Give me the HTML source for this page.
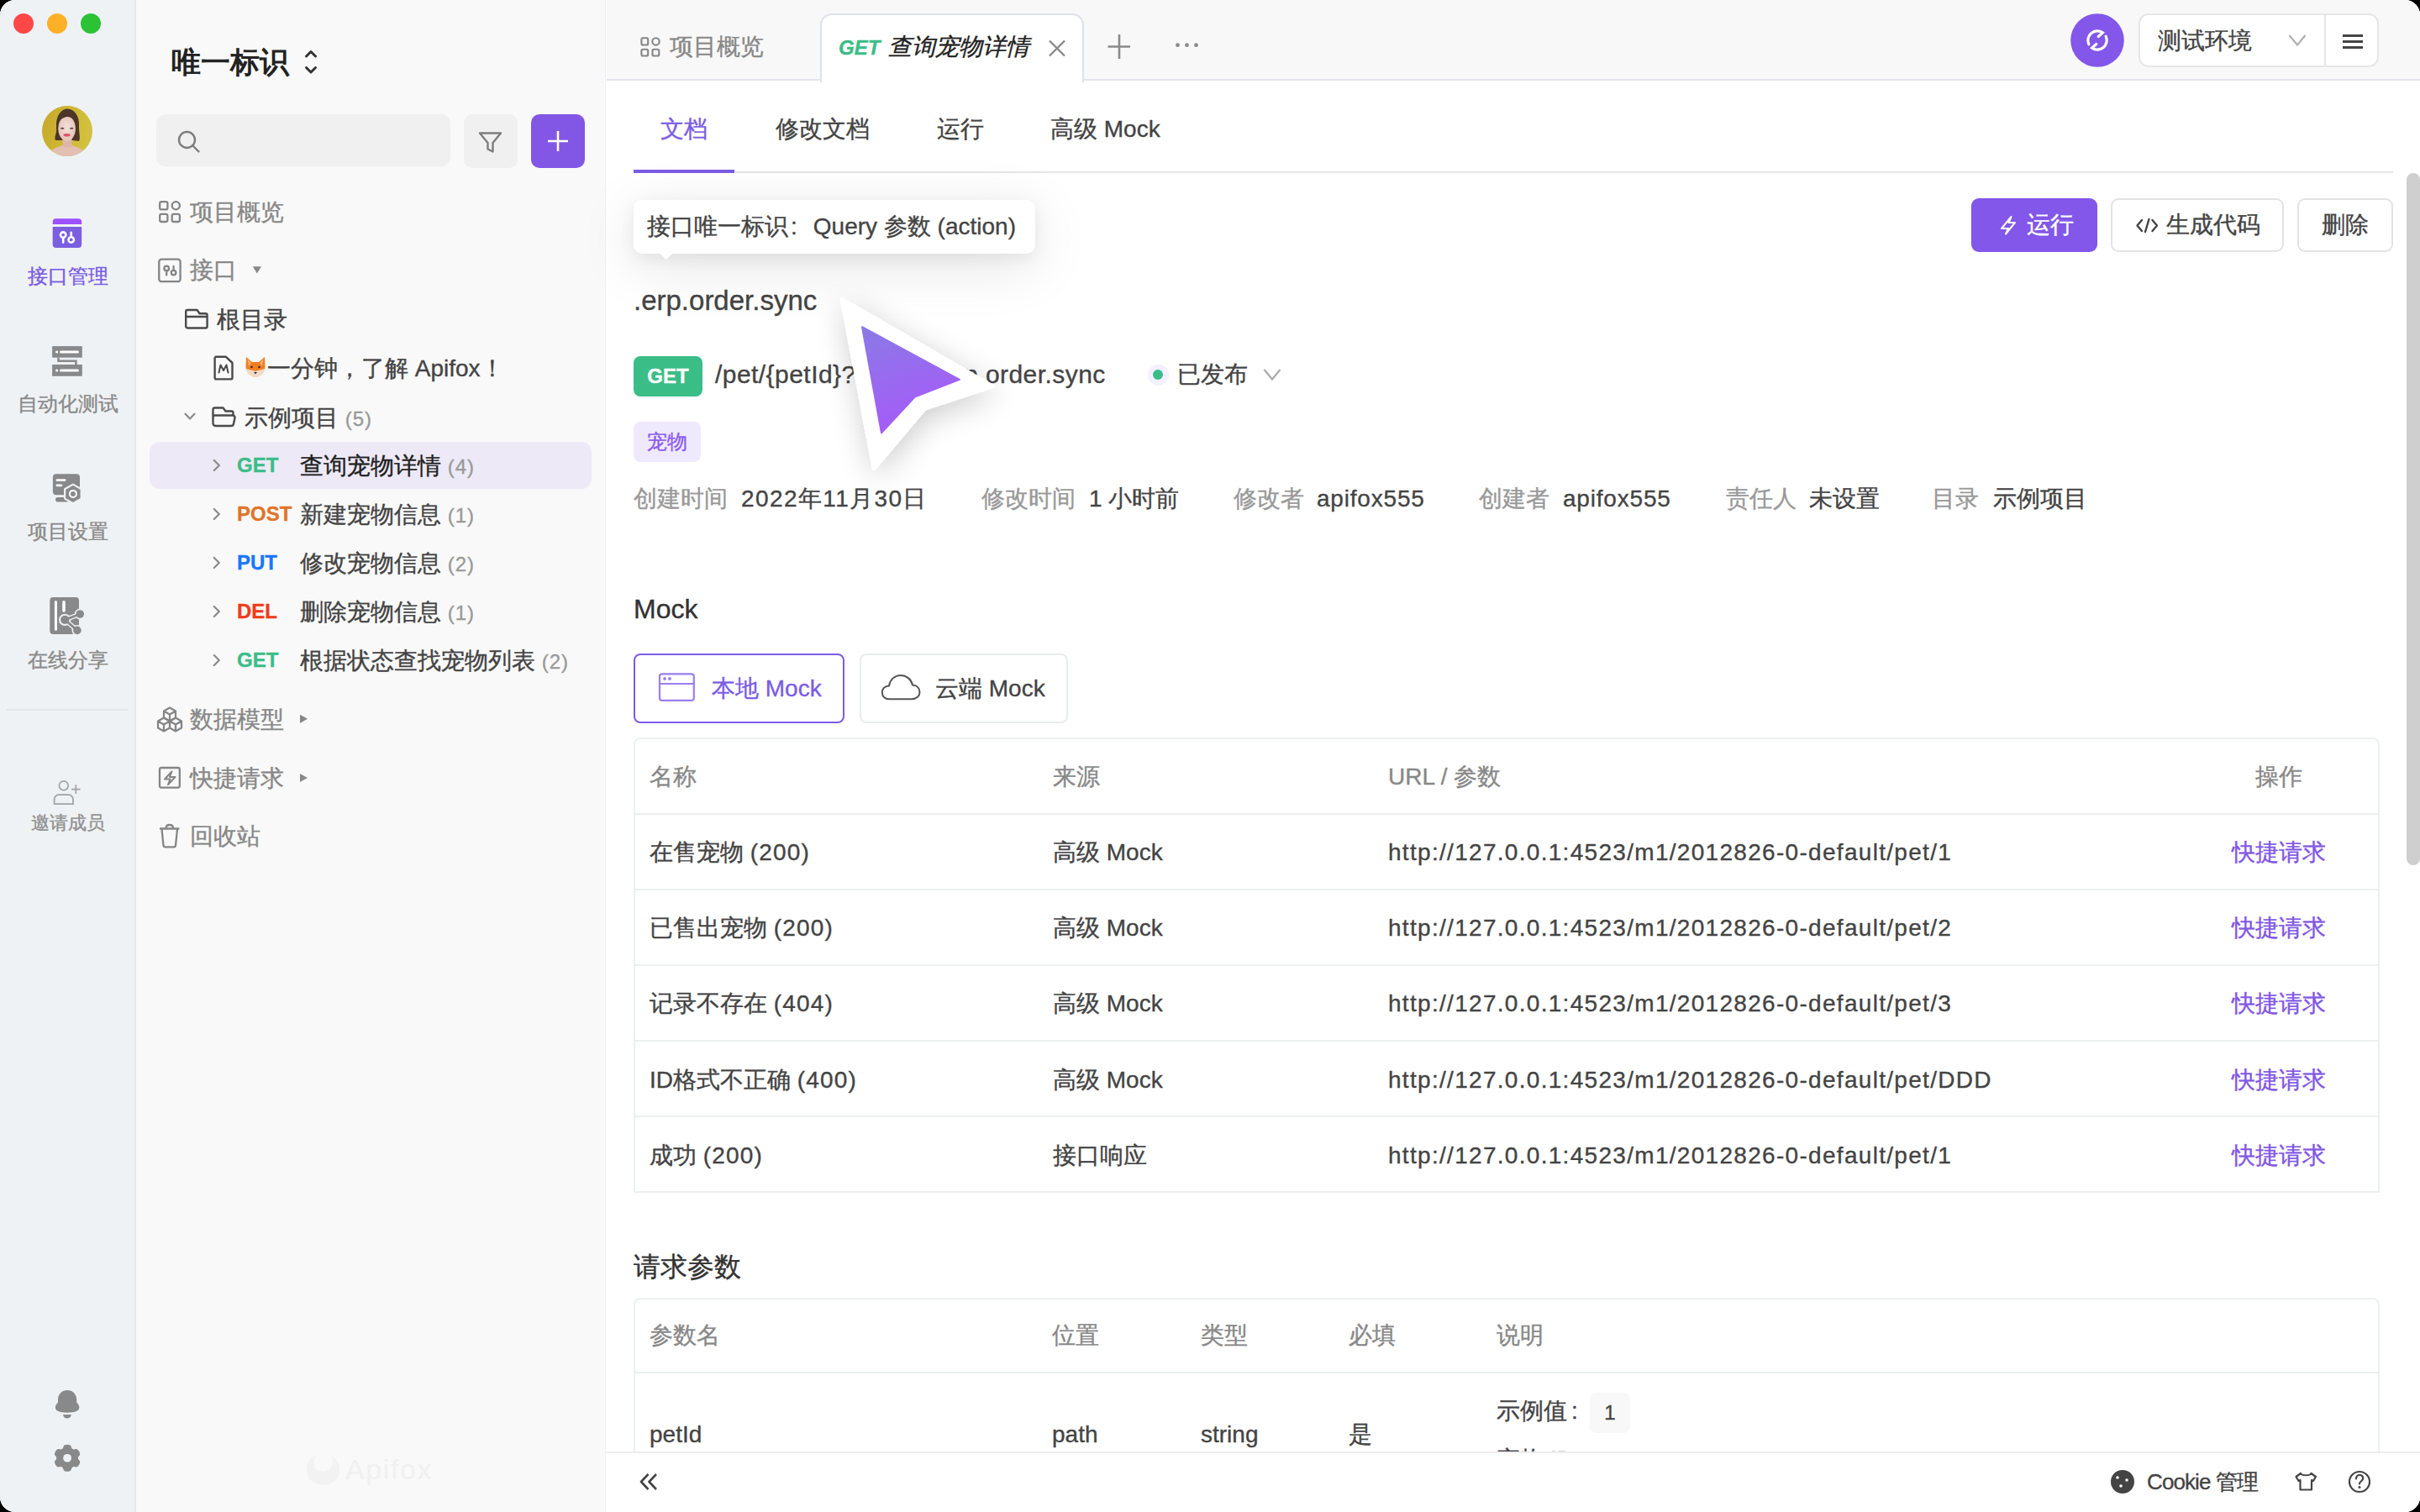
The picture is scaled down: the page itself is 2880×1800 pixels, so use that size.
<!DOCTYPE html>
<html><head><meta charset="utf-8">
<style>
*{margin:0;padding:0;box-sizing:border-box}
html,body{width:2880px;height:1800px;overflow:hidden;background:#000}
body{font-family:"Liberation Sans",sans-serif;color:#444;-webkit-text-stroke:0.35px currentColor}
#win{position:absolute;left:0;top:0;width:2880px;height:1800px;border-radius:18px;overflow:hidden;background:#fff}
.a{position:absolute;white-space:nowrap}
#rail{position:absolute;left:0;top:0;width:162px;height:1800px;background:#eff2f4;border-right:2px solid #e6e9ec}
#tree{position:absolute;left:162px;top:0;width:560px;height:1800px;background:#f9f9f9;border-right:2px solid #eef1f4}
#main{position:absolute;left:721px;top:0;width:2159px;height:1800px;background:#fff}
.dot{position:absolute;width:24px;height:24px;border-radius:50%}
.rl{position:absolute;left:0;width:162px;text-align:center;font-size:24px;color:#8a8a8a;line-height:30px}
.ti{position:absolute;font-size:28px;line-height:36px;color:#444;white-space:nowrap}
.cnt{font-size:24px;color:#999;letter-spacing:1px}
.m{position:absolute;font-size:24px;font-weight:bold;line-height:36px}
</style></head><body>
<div id="win">
<!-- ============ LEFT RAIL ============ -->
<div id="rail">
  <div class="dot" style="left:16px;top:16px;background:#fe4848"></div>
  <div class="dot" style="left:56px;top:16px;background:#feb027"></div>
  <div class="dot" style="left:96px;top:16px;background:#2bc334"></div>
  <svg class="a" style="left:50px;top:126px" width="60" height="60" viewBox="0 0 60 60">
    <defs><clipPath id="avc"><circle cx="30" cy="30" r="30"/></clipPath>
    <linearGradient id="avbg" x1="0" y1="0" x2="1" y2="0.3"><stop offset="0" stop-color="#c8a52c"/><stop offset="0.5" stop-color="#cdb632"/><stop offset="1" stop-color="#d2c13e"/></linearGradient>
    <radialGradient id="skin" cx="0.5" cy="0.45" r="0.6"><stop offset="0" stop-color="#f5e0da"/><stop offset="1" stop-color="#e2c0b2"/></radialGradient></defs>
    <g clip-path="url(#avc)">
      <rect width="60" height="60" fill="url(#avbg)"/>
      <path d="M17 26 C16 11 23 4 30 3.5 C38 4 45 11 44 25 C44 33 46 38 44 42 L36 41 L24 41 L16 41 C14 36 18 33 17 26Z" fill="#4d3528"/>
      <path d="M4 60 C8 53 16 50 24 47 L36 47 C44 50 52 53 56 60Z" fill="#e2bfb0"/>
      <rect x="24.5" y="36" width="11" height="13" fill="#dcb6a6"/>
      <ellipse cx="29.6" cy="27" rx="10.3" ry="15" fill="url(#skin)"/>
      <path d="M19 20 C21 10 29 7.5 33 8 C40 9 43 15 42 24 C40 17 36 13.5 30 13 C25 13.5 21 17 19 20Z" fill="#4d3528"/>
      <ellipse cx="24.2" cy="26.8" rx="2.4" ry="1.1" fill="#6b5550"/>
      <ellipse cx="35.2" cy="26.8" rx="2.4" ry="1.1" fill="#6b5550"/>
      <ellipse cx="29.6" cy="34.8" rx="4.2" ry="1.8" fill="#e24e6a"/>
    </g>
  </svg>
  <svg class="a" style="left:0;top:240px" width="162" height="620" viewBox="0 240 162 620">
    <!-- api icon -->
    <path d="M62.7 267 V264.3 a4 4 0 0 1 4 -4 H93.2 a4 4 0 0 1 4 4 V267Z" fill="#9d50ff"/>
    <path d="M62.7 270 H97.2 V291 a4 4 0 0 1 -4 4 H66.7 a4 4 0 0 1 -4 -4Z" fill="#7b5fe0"/>
    <circle cx="75.2" cy="279.6" r="3.2" fill="none" stroke="#fff" stroke-width="2.6"/>
    <path d="M75.2 283 V288.6" stroke="#fff" stroke-width="2.6" stroke-linecap="round"/>
    <circle cx="84.7" cy="285.4" r="3.2" fill="none" stroke="#fff" stroke-width="2.6"/>
    <path d="M84.7 276.8 V282" stroke="#fff" stroke-width="2.6" stroke-linecap="round"/>
    <!-- auto test -->
    <rect x="62.1" y="412.1" width="35.7" height="13.6" fill="#88898b"/>
    <rect x="62.1" y="434" width="35.7" height="13.8" fill="#88898b"/>
    <circle cx="67.6" cy="419" r="1.6" fill="#fff"/>
    <rect x="71" y="417.5" width="23" height="3" rx="1.5" fill="#fff"/>
    <circle cx="67.6" cy="441" r="1.6" fill="#fff"/>
    <rect x="71" y="439.5" width="23" height="3" rx="1.5" fill="#fff"/>
    <path d="M69.5 425.7 V429.8 H90.4 V434" fill="none" stroke="#88898b" stroke-width="2.6"/>
    <!-- settings -->
    <rect x="62.9" y="564.3" width="32.1" height="25" rx="4" fill="#88898b"/>
    <rect x="66" y="592" width="16" height="5.6" rx="2.8" fill="#88898b"/>
    <rect x="66.5" y="570.2" width="12" height="2.8" rx="1.4" fill="#fff"/>
    <rect x="66.5" y="576.4" width="7.8" height="2.8" rx="1.4" fill="#fff"/>
    <path d="M86.9 576.6 L96.7 582.2 V593.6 L86.9 599.2 L77.1 593.6 V582.2Z" fill="#88898b" stroke="#eff2f4" stroke-width="2.2" stroke-linejoin="round"/>
    <circle cx="86.9" cy="587.9" r="4" fill="none" stroke="#fff" stroke-width="2"/>
    <!-- share -->
    <rect x="59.3" y="711" width="34.7" height="44" rx="4" fill="#88898b"/>
    <rect x="64.9" y="715" width="3.1" height="35.8" rx="1.5" fill="#fff"/>
    <rect x="74.2" y="715" width="3.6" height="13.8" rx="1.8" fill="#fff"/>
    <g stroke="#eff2f4" stroke-width="5.5" fill="none" stroke-linecap="round"><path d="M77.2 737.9 L95.2 731 M77.2 737.9 L91.9 750.4"/></g>
    <circle cx="77.2" cy="737.9" r="7.2" fill="#eff2f4"/>
    <circle cx="95.2" cy="731" r="6.4" fill="#eff2f4"/>
    <circle cx="91.9" cy="750.4" r="6.4" fill="#eff2f4"/>
    <g stroke="#88898b" stroke-width="2.8" fill="none"><path d="M77.2 737.9 L95.2 731 M77.2 737.9 L91.9 750.4"/></g>
    <circle cx="77.2" cy="737.9" r="5.1" fill="#88898b"/>
    <circle cx="95.2" cy="731" r="4.8" fill="#88898b"/>
    <circle cx="91.9" cy="750.4" r="4.8" fill="#88898b"/>
    <!-- divider -->
    <rect x="8" y="844" width="144" height="2" fill="#e3e6e9"/>
  </svg>
  <div class="rl" style="top:314px;color:#7b5ce5;font-weight:500">接口管理</div>
  <div class="rl" style="top:466px">自动化测试</div>
  <div class="rl" style="top:618px">项目设置</div>
  <div class="rl" style="top:771px">在线分享</div>
  <svg class="a" style="left:50px;top:920px" width="60" height="60" viewBox="50 920 60 60">
    <circle cx="75.8" cy="935.3" r="5.4" fill="none" stroke="#a0a1a3" stroke-width="1.7"/>
    <path d="M64.6 957.2 V951.6 a5.4 5.4 0 0 1 5.4 -5.4 H81.6 a5.4 5.4 0 0 1 5.4 5.4 V957.2Z" fill="none" stroke="#a0a1a3" stroke-width="1.8"/>
    <path d="M85 939.7 H95.6 M90.3 934.3 V945" stroke="#a0a1a3" stroke-width="1.7"/>
  </svg>
  <div class="rl" style="top:965px;font-size:22px;color:#909090">邀请成员</div>
  <svg class="a" style="left:50px;top:1640px" width="60" height="130" viewBox="50 1640 60 130">
    <path d="M69 1669.5 V1666 C69 1659.5 74 1655 80.1 1655 C86.2 1655 91.2 1659.5 91.2 1666 V1669.5 C93 1671.5 94.3 1673 94.3 1675.5 C94.3 1679.5 90 1681.7 80.1 1681.7 C70.2 1681.7 65.9 1679.5 65.9 1675.5 C65.9 1673 67.2 1671.5 69 1669.5Z" fill="#88898b"/>
    <path d="M75 1684 H84.8 C84.3 1687 82.5 1688.6 79.9 1688.6 C77.3 1688.6 75.5 1687 75 1684Z" fill="#88898b"/>
    <g transform="translate(80.1 1735.8)">
      <path d="M-4.6 -13.6 C-4.2 -16.8 4.2 -16.8 4.6 -13.6 C5 -11 7.4 -9.6 9.8 -10.7 C12.6 -12 16.8 -4.8 14.4 -3 C12.2 -1.4 12.2 1.4 14.4 3 C16.8 4.8 12.6 12 9.8 10.7 C7.4 9.6 5 11 4.6 13.6 C4.2 16.8 -4.2 16.8 -4.6 13.6 C-5 11 -7.4 9.6 -9.8 10.7 C-12.6 12 -16.8 4.8 -14.4 3 C-12.2 1.4 -12.2 -1.4 -14.4 -3 C-16.8 -4.8 -12.6 -12 -9.8 -10.7 C-7.4 -9.6 -5 -11 -4.6 -13.6Z" fill="#88898b"/>
      <circle r="4.9" fill="#eff2f4"/>
    </g>
  </svg>
</div>
<!-- ============ TREE ============ -->
<div id="tree"></div>
<div id="treec">
  <div class="a" style="left:178px;top:526px;width:526px;height:56px;background:#ede9f6;border-radius:12px"></div>
  <div class="a" style="left:204px;top:50px;font-size:35px;line-height:47px;font-weight:bold;color:#222;-webkit-text-stroke:0">唯一标识</div>
  <div class="a" style="left:186px;top:136px;width:350px;height:62px;background:#f0f0f0;border-radius:10px"></div>
  <div class="a" style="left:552px;top:136px;width:64px;height:64px;background:#f0f0f0;border-radius:10px"></div>
  <div class="a" style="left:632px;top:136px;width:64px;height:64px;background:#8257e5;border-radius:10px"></div>
  <svg class="a" style="left:162px;top:0" width="560" height="1800" viewBox="162 0 560 1800">
    <g fill="none" stroke="#333" stroke-width="3" stroke-linecap="round" stroke-linejoin="round">
      <path d="M364.5 67 L370 61.5 L375.5 67 M364.5 80.5 L370 86 L375.5 80.5"/>
    </g>
    <g fill="none" stroke="#7d7d7d" stroke-width="2.4" stroke-linecap="round">
      <circle cx="222.5" cy="166.5" r="9.5"/><path d="M229.5 173.5 L236.5 180.5"/>
    </g>
    <path d="M571 158.5 H596 L586.5 170 V180.5 L580.5 177.5 V170Z" fill="none" stroke="#7d7d7d" stroke-width="2.4" stroke-linejoin="round"/>
    <path d="M664 156 V180 M652 168 H676" stroke="#fff" stroke-width="2.6"/>
    <!-- overview icon -->
    <g fill="none" stroke="#858585" stroke-width="2.3">
      <rect x="190.2" y="240.2" width="9.2" height="9.2" rx="2"/>
      <circle cx="209.3" cy="244.8" r="4.6"/>
      <rect x="190.2" y="254.8" width="9.2" height="9.2" rx="2"/>
      <rect x="204.7" y="254.8" width="9.2" height="9.2" rx="2"/>
    </g>
    <!-- api icon -->
    <g fill="none" stroke="#858585" stroke-width="2.3" stroke-linecap="round">
      <rect x="189.3" y="308.6" width="25.3" height="26.6" rx="3"/>
      <circle cx="198.2" cy="319.4" r="2.8"/><path d="M198.2 322.4 V327.6"/>
      <circle cx="206.6" cy="324.6" r="2.8"/><path d="M206.6 316.8 V321.6"/>
    </g>
    <path d="M300.8 317.3 H311 L305.9 325.5Z" fill="#888"/>
    <!-- root folder -->
    <path d="M221.2 389 V371 a2 2 0 0 1 2 -2 H234.5 L237.5 373.2 H244.6 a2 2 0 0 1 2 2 V388.5 a2 2 0 0 1 -2 2 H223.2 a2 2 0 0 1 -2 -1.5Z M221.2 377 H246.6" fill="none" stroke="#4a4a4a" stroke-width="2.4" stroke-linejoin="round"/>
    <!-- doc icon -->
    <path d="M256.6 424.7 H268.7 L276.5 432 V449.4 a2 2 0 0 1 -2 2 H257.6 a2 2 0 0 1 -2 -2 V426.7 a2 2 0 0 1 1 -2Z" fill="none" stroke="#4a4a4a" stroke-width="2.4" stroke-linejoin="round"/>
    <path d="M260.5 443.5 L262.5 434.5 L266 441 L269.5 434.5 L271.5 443.5" fill="none" stroke="#4a4a4a" stroke-width="2" stroke-linejoin="round" stroke-linecap="round"/>
    <!-- fox -->
    <g transform="translate(291 424)">
      <path d="M2 1 L9 7 L17 7 L24 1 L24.5 13 C24 19 19 24 13 25 C7 24 2 19 1.5 13Z" fill="#f47d20"/>
      <path d="M3.5 3.5 L8 8 L5 12Z M22.5 3.5 L18 8 L21 12Z" fill="#f9b37a"/>
      <path d="M1.6 15 C4 16 8 16 13 18 C18 16 22 16 24.4 15 C23.5 20 19 24.5 13 25 C7 24.5 2.5 20 1.6 15Z" fill="#efdcc2"/>
      <circle cx="8.5" cy="13" r="1.3" fill="#2b2b3a"/><circle cx="17.5" cy="13" r="1.3" fill="#2b2b3a"/>
      <path d="M11 19 H15 L13 21.5Z" fill="#2b2b3a"/>
    </g>
    <!-- chevron down -->
    <path d="M220.5 492.7 L226 498.5 L231.5 492.7" fill="none" stroke="#8a8a8a" stroke-width="2.2" stroke-linecap="round" stroke-linejoin="round"/>
    <!-- open folder -->
    <path d="M253.5 504 V487.5 a2 2 0 0 1 2 -2 H265.5 L268.5 489.5 H275.5 a2 2 0 0 1 2 2 V494 M253.5 504 a3 3 0 0 0 3 3 H275 a3 3 0 0 0 3 -2.5 L279.5 497.5 a2.5 2.5 0 0 0 -2.5 -3 H256 a2.5 2.5 0 0 0 -2.5 2.5" fill="none" stroke="#4a4a4a" stroke-width="2.4" stroke-linejoin="round"/>
    <!-- method chevrons -->
    <g fill="none" stroke="#8a8a8a" stroke-width="2.2" stroke-linecap="round" stroke-linejoin="round">
      <path d="M254.8 548 L260.8 554 L254.8 560"/>
      <path d="M254.8 606 L260.8 612 L254.8 618"/>
      <path d="M254.8 664 L260.8 670 L254.8 676"/>
      <path d="M254.8 722 L260.8 728 L254.8 734"/>
      <path d="M254.8 780 L260.8 786 L254.8 792"/>
    </g>
    <!-- data model cubes -->
    <g fill="none" stroke="#858585" stroke-width="2.2" stroke-linejoin="round">
      <path d="M202 842.5 L209 846.5 V854.5 L202 858.5 L195 854.5 V846.5Z M195 846.5 L202 850.5 L209 846.5 M202 850.5 V858.5"/>
      <path d="M195 854.5 L202 858.5 V866.5 L195 870.5 L188 866.5 V858.5Z M188 858.5 L195 862.5 L202 858.5 M195 862.5 V870.5"/>
      <path d="M209 854.5 L216 858.5 V866.5 L209 870.5 L202 866.5 V858.5Z M202 858.5 L209 862.5 L216 858.5 M209 862.5 V870.5"/>
    </g>
    <path d="M357 850.7 L366 855.8 L357 860.9Z" fill="#888"/>
    <!-- quick request -->
    <rect x="190" y="914" width="23.8" height="23.6" rx="2" fill="none" stroke="#858585" stroke-width="2.3"/>
    <path d="M204.5 918.5 L196 927.5 H202.5 L200 934 L208.5 925 H202Z" fill="none" stroke="#858585" stroke-width="2" stroke-linejoin="round"/>
    <path d="M357 921 L366 926 L357 931Z" fill="#888"/>
    <!-- trash -->
    <path d="M190 986.5 H213.5 M197.5 986 C197.5 982.5 200 982 201.8 982 C203.6 982 206 982.5 206 986 M192.5 987 L194.5 1006.5 a2 2 0 0 0 2 1.8 H207 a2 2 0 0 0 2 -1.8 L211 987" fill="none" stroke="#858585" stroke-width="2.3" stroke-linejoin="round"/>
    <!-- watermark -->
    <path d="M376 1732.5 C368 1736 364.8 1743 364.8 1750 C364.8 1760 373 1768 384.4 1768 C395.8 1768 404 1760 404 1750 C404 1743 400.5 1736 393 1732 C395.5 1735 396 1738 396 1740 C396 1747 390.5 1751.5 384 1751.5 C377.5 1751.5 373.5 1747 373.5 1740 C373.5 1737.5 374.5 1735 376 1732.5Z" fill="#f2f2f2"/>
  </svg>
  <div class="a" style="left:411px;top:1729px;font-size:34px;line-height:40px;letter-spacing:1.6px;color:#f0f0f0;-webkit-text-stroke:0">Apifox</div>
  <div class="ti" style="left:226px;top:235px;color:#888">项目概览</div>
  <div class="ti" style="left:226px;top:304px;color:#888">接口</div>
  <div class="ti" style="left:258px;top:363px">根目录</div>
  <div class="ti" style="left:318px;top:421px">一分钟，了解 Apifox！</div>
  <div class="ti" style="left:291px;top:480px">示例项目 <span class="cnt">(5)</span></div>
  <div class="m" style="left:282px;top:536px;color:#3bbd87">GET</div>
  <div class="ti" style="left:357px;top:537px;color:#222">查询宠物详情 <span class="cnt">(4)</span></div>
  <div class="m" style="left:282px;top:594px;color:#e0742a">POST</div>
  <div class="ti" style="left:357px;top:595px">新建宠物信息 <span class="cnt">(1)</span></div>
  <div class="m" style="left:282px;top:652px;color:#1a75ff">PUT</div>
  <div class="ti" style="left:357px;top:653px">修改宠物信息 <span class="cnt">(2)</span></div>
  <div class="m" style="left:282px;top:710px;color:#f03c17">DEL</div>
  <div class="ti" style="left:357px;top:711px">删除宠物信息 <span class="cnt">(1)</span></div>
  <div class="m" style="left:282px;top:768px;color:#3bbd87">GET</div>
  <div class="ti" style="left:357px;top:769px">根据状态查找宠物列表 <span class="cnt">(2)</span></div>
  <div class="ti" style="left:226px;top:839px;color:#888">数据模型</div>
  <div class="ti" style="left:226px;top:909px;color:#888">快捷请求</div>
  <div class="ti" style="left:226px;top:978px;color:#888">回收站</div>
</div>
<!-- ============ MAIN ============ -->
<div id="main"></div>
<div id="mainc">
  <!-- tab bar -->
  <div class="a" style="left:722px;top:0;width:2158px;height:96px;background:#f8f8f8;border-bottom:2px solid #e3e6ec"></div>
  <div class="a" style="left:976px;top:16px;width:314px;height:82px;background:#fff;border:2px solid #dfe2ea;border-bottom:none;border-radius:14px 14px 0 0"></div>
  <div class="ti" style="left:797px;top:38px;color:#888">项目概览</div>
  <div class="a" style="left:998px;top:39px;font-size:24px;line-height:36px;font-weight:bold;font-style:italic;color:#3bbd87">GET</div>
  <div class="ti" style="left:1057px;top:38px;color:#222;font-style:italic">查询宠物详情</div>
  <div class="a" style="left:2545px;top:16px;width:286px;height:64px;background:#fff;border:2px solid #e6e6e6;border-radius:12px"></div>
  <div class="a" style="left:2766px;top:17px;width:2px;height:62px;background:#e6e6e6"></div>
  <div class="ti" style="left:2568px;top:31px;color:#444">测试环境</div>
  <!-- sub tabs -->
  <div class="ti" style="left:786px;top:136px;color:#7b5ce5">文档</div>
  <div class="ti" style="left:923px;top:136px">修改文档</div>
  <div class="ti" style="left:1115px;top:136px">运行</div>
  <div class="ti" style="left:1250px;top:136px">高级 Mock</div>
  <div class="a" style="left:754px;top:204px;width:2094px;height:2px;background:#e6e6e6"></div>
  <div class="a" style="left:754px;top:202px;width:120px;height:4px;background:#7b5ce5"></div>
  <!-- action buttons -->
  <div class="a" style="left:2346px;top:236px;width:150px;height:64px;background:#8257e9;border-radius:9px"></div>
  <div class="ti" style="left:2412px;top:250px;color:#fff">运行</div>
  <div class="a" style="left:2512px;top:236px;width:206px;height:64px;border:2px solid #e3e3e3;border-radius:9px"></div>
  <div class="ti" style="left:2578px;top:250px">生成代码</div>
  <div class="a" style="left:2734px;top:236px;width:114px;height:64px;border:2px solid #e3e3e3;border-radius:9px"></div>
  <div class="ti" style="left:2763px;top:250px">删除</div>
  <!-- api header -->
  <div class="a" style="left:754px;top:336px;font-size:33px;line-height:44px;color:#444">.erp.order.sync</div>
  <div class="a" style="left:754px;top:424px;width:82px;height:48px;background:#3bbd87;border-radius:8px"></div>
  <div class="a" style="left:754px;top:430px;width:82px;text-align:center;font-size:24px;line-height:36px;font-weight:bold;color:#fff">GET</div>
  <div class="a" style="left:851px;top:426px;font-size:30px;line-height:40px;letter-spacing:0.45px;color:#444">/pet/{petId}?action=erp.order.sync</div>
  <div class="a" style="left:1365.5px;top:433.5px;width:25px;height:25px;border-radius:50%;background:#f4f0fd"></div>
  <div class="a" style="left:1372px;top:440px;width:12px;height:12px;border-radius:50%;background:#3bbd87"></div>
  <div class="ti" style="left:1401px;top:428px">已发布</div>
  <div class="a" style="left:754px;top:502px;width:80px;height:48px;background:#efe9fd;border-radius:8px"></div>
  <div class="a" style="left:754px;top:508px;width:80px;text-align:center;font-size:24px;line-height:36px;color:#8b5cf0">宠物</div>
  <!-- meta -->
  <div class="ti" style="left:754px;top:576px;color:#999">创建时间</div>
  <div class="ti" style="left:882px;top:576px;letter-spacing:1.4px">2022年11月30日</div>
  <div class="ti" style="left:1168px;top:576px;color:#999">修改时间</div>
  <div class="ti" style="left:1296px;top:576px">1 小时前</div>
  <div class="ti" style="left:1468px;top:576px;color:#999">修改者</div>
  <div class="ti" style="left:1567px;top:576px;letter-spacing:0.8px">apifox555</div>
  <div class="ti" style="left:1760px;top:576px;color:#999">创建者</div>
  <div class="ti" style="left:1860px;top:576px;letter-spacing:0.8px">apifox555</div>
  <div class="ti" style="left:2054px;top:576px;color:#999">责任人</div>
  <div class="ti" style="left:2153px;top:576px">未设置</div>
  <div class="ti" style="left:2299px;top:576px;color:#999">目录</div>
  <div class="ti" style="left:2372px;top:576px">示例项目</div>
  <!-- mock -->
  <div class="a" style="left:754px;top:703px;font-size:32px;line-height:44px;color:#333">Mock</div>
  <div class="a" style="left:754px;top:778px;width:251px;height:83px;border:2.5px solid #7b5ce5;border-radius:8px"></div>
  <div class="ti" style="left:847px;top:802px;color:#7b5ce5">本地 Mock</div>
  <div class="a" style="left:1023px;top:778px;width:248px;height:83px;border:2px solid #e9eded;border-radius:8px"></div>
  <div class="ti" style="left:1113px;top:802px">云端 Mock</div>
  <div class="a" style="left:754px;top:878px;width:2078px;height:542px;border:2px solid #edf0f0;border-radius:8px 8px 0 0"></div>
  <div class="a" style="left:756px;top:968px;width:2074px;height:2px;background:#edf0f0"></div>
  <div class="a" style="left:756px;top:1058px;width:2074px;height:2px;background:#edf0f0"></div>
  <div class="a" style="left:756px;top:1148px;width:2074px;height:2px;background:#edf0f0"></div>
  <div class="a" style="left:756px;top:1238px;width:2074px;height:2px;background:#edf0f0"></div>
  <div class="a" style="left:756px;top:1328px;width:2074px;height:2px;background:#edf0f0"></div>
  <div class="ti" style="left:773px;top:907px;color:#888">名称</div>
  <div class="ti" style="left:1253px;top:907px;color:#888">来源</div>
  <div class="ti" style="left:1652px;top:907px;color:#888">URL / 参数</div>
  <div class="ti" style="left:2684px;top:907px;color:#888">操作</div>
  <div class="ti" style="left:773px;top:997px">在售宠物 <span style="letter-spacing:1.2px">(200)</span></div>
  <div class="ti" style="left:1253px;top:997px">高级 Mock</div>
  <div class="ti" style="left:1652px;top:997px;letter-spacing:1.3px">http://127.0.0.1:4523/m1/2012826-0-default/pet/1</div>
  <div class="ti" style="left:2656px;top:997px;color:#8257e5">快捷请求</div>
  <div class="ti" style="left:773px;top:1087px">已售出宠物 <span style="letter-spacing:1.2px">(200)</span></div>
  <div class="ti" style="left:1253px;top:1087px">高级 Mock</div>
  <div class="ti" style="left:1652px;top:1087px;letter-spacing:1.3px">http://127.0.0.1:4523/m1/2012826-0-default/pet/2</div>
  <div class="ti" style="left:2656px;top:1087px;color:#8257e5">快捷请求</div>
  <div class="ti" style="left:773px;top:1177px">记录不存在 <span style="letter-spacing:1.2px">(404)</span></div>
  <div class="ti" style="left:1253px;top:1177px">高级 Mock</div>
  <div class="ti" style="left:1652px;top:1177px;letter-spacing:1.3px">http://127.0.0.1:4523/m1/2012826-0-default/pet/3</div>
  <div class="ti" style="left:2656px;top:1177px;color:#8257e5">快捷请求</div>
  <div class="ti" style="left:773px;top:1268px">ID格式不正确 <span style="letter-spacing:1.2px">(400)</span></div>
  <div class="ti" style="left:1253px;top:1268px">高级 Mock</div>
  <div class="ti" style="left:1652px;top:1268px;letter-spacing:1.3px">http://127.0.0.1:4523/m1/2012826-0-default/pet/DDD</div>
  <div class="ti" style="left:2656px;top:1268px;color:#8257e5">快捷请求</div>
  <div class="ti" style="left:773px;top:1358px">成功 <span style="letter-spacing:1.2px">(200)</span></div>
  <div class="ti" style="left:1253px;top:1358px">接口响应</div>
  <div class="ti" style="left:1652px;top:1358px;letter-spacing:1.3px">http://127.0.0.1:4523/m1/2012826-0-default/pet/1</div>
  <div class="ti" style="left:2656px;top:1358px;color:#8257e5">快捷请求</div>
  <!-- params -->
  <div class="a" style="left:754px;top:1486px;font-size:32px;line-height:44px;color:#333">请求参数</div>
  <div class="a" style="left:754px;top:1545px;width:2078px;height:300px;border:2px solid #edf0f0;border-radius:8px 8px 0 0"></div>
  <div class="a" style="left:756px;top:1633px;width:2074px;height:2px;background:#edf0f0"></div>
  <div class="ti" style="left:773px;top:1572px;color:#888">参数名</div>
  <div class="ti" style="left:1252px;top:1572px;color:#888">位置</div>
  <div class="ti" style="left:1429px;top:1572px;color:#888">类型</div>
  <div class="ti" style="left:1605px;top:1572px;color:#888">必填</div>
  <div class="ti" style="left:1781px;top:1572px;color:#888">说明</div>
  <div class="ti" style="left:773px;top:1690px">petId</div>
  <div class="ti" style="left:1252px;top:1690px">path</div>
  <div class="ti" style="left:1429px;top:1690px">string</div>
  <div class="ti" style="left:1605px;top:1690px">是</div>
  <div class="ti" style="left:1781px;top:1662px">示例值<span style="margin-left:5px">:</span></div>
  <div class="a" style="left:1892px;top:1658px;width:48px;height:48px;background:#f8f8f8;border-radius:8px"></div>
  <div class="a" style="left:1892px;top:1664px;width:48px;text-align:center;font-size:24px;line-height:36px;color:#444">1</div>
  <div class="ti" style="left:1781px;top:1720px">宠物 ID</div>
  <!-- scrollbar -->
  <div class="a" style="left:2864px;top:206px;width:16px;height:824px;background:#cfcfcf;border-radius:8px"></div>
  <!-- footer -->
  <div class="a" style="left:721px;top:1728px;width:2159px;height:72px;background:#fff;border-top:2px solid #eeeeee"></div>
  <div class="a" style="left:2555px;top:1746px;font-size:26px;line-height:36px;color:#444;letter-spacing:-0.9px">Cookie 管理</div>
  <!-- tooltip -->
  <div class="a" style="left:754px;top:238px;width:478px;height:64px;background:#fff;border-radius:10px;box-shadow:0 14px 70px rgba(0,0,0,0.11),0 6px 18px rgba(0,0,0,0.07)"></div>
  <svg class="a" style="left:780px;top:296px" width="26" height="16" viewBox="780 296 26 16"><path d="M784.4 301 L792.8 309 L801.3 301Z" fill="#fff"/></svg>
  <div class="ti" style="left:770px;top:252px">接口唯一标识<span style="margin:0 19px 0 3px">:</span>Query 参数 (action)</div>
  <svg class="a" style="left:721px;top:0" width="2159" height="1800" viewBox="721 0 2159 1800">
    <!-- tab1 icon -->
    <g fill="none" stroke="#858585" stroke-width="2.1">
      <rect x="763.4" y="45.2" width="7.8" height="8.3" rx="1.8"/>
      <circle cx="780.5" cy="49.4" r="4.2"/>
      <rect x="763.4" y="58.7" width="7.8" height="7.8" rx="1.8"/>
      <rect x="776.5" y="58.7" width="7.8" height="7.8" rx="1.8"/>
    </g>
    <path d="M1249 48.5 L1267 66.5 M1267 48.5 L1249 66.5" stroke="#8a8a8a" stroke-width="2.4"/>
    <path d="M1332 41 V70 M1318.5 55.5 H1345" stroke="#8a8a8a" stroke-width="2.6"/>
    <g fill="#8a8a8a"><circle cx="1401.5" cy="53.7" r="2.4"/><circle cx="1412.5" cy="53.7" r="2.4"/><circle cx="1423.5" cy="53.7" r="2.4"/></g>
    <!-- sync -->
    <circle cx="2496" cy="48" r="31.8" fill="#8257e9"/>
    <g fill="none" stroke="#fff" stroke-width="3.2" stroke-linecap="round">
      <path d="M2485.85 52.73 A11.2 11.2 0 0 1 2502.42 38.83 L2497.2 43.5"/>
      <path d="M2506.15 43.27 A11.2 11.2 0 0 1 2489.58 57.17 L2494.8 52.5"/>
    </g>
    <path d="M2724.5 42 L2734 53.5 L2743.5 42" fill="none" stroke="#b0b0b0" stroke-width="2.2"/>
    <path d="M2788 42.5 H2812 M2788 49.5 H2812 M2788 56.5 H2812" stroke="#444" stroke-width="3"/>
    <!-- run bolt -->
    <path d="M2393.5 258 L2382 272 H2390 L2387 278.5 L2398 265 H2390.5Z" fill="none" stroke="#fff" stroke-width="2" stroke-linejoin="round"/>
    <path d="M2549 262 L2543.5 268.5 L2549 275 M2561.5 262 L2567 268.5 L2561.5 275 M2557.5 261 L2553 276" fill="none" stroke="#444" stroke-width="2.4" stroke-linecap="round" stroke-linejoin="round"/>
    <path d="M1504.5 440 L1514 451.5 L1523.5 440" fill="none" stroke="#aaa" stroke-width="2.2"/>
    <!-- local mock icon -->
    <g fill="none" stroke="#9b7ef0" stroke-width="2.2">
      <rect x="785" y="802.3" width="40.8" height="31.6" rx="3"/>
      <path d="M785 814 H825.8"/>
    </g>
    <g fill="#9b7ef0"><circle cx="791" cy="808" r="1.9"/><circle cx="797" cy="808" r="1.9"/></g>
    <!-- cloud -->
    <path d="M1058 832.2 H1085 C1091 832.2 1094.5 828.5 1094.5 824 C1094.5 819 1091 815.5 1086 815.5 C1084.5 808.5 1078.5 804 1072 804 C1064.5 804 1059 809.5 1058 816.5 C1053 816.5 1049.8 820 1049.8 824.2 C1049.8 828.8 1053 832.2 1058 832.2Z" fill="none" stroke="#555" stroke-width="2"/>
    <!-- footer icons -->
    <path d="M781 1755 L772.5 1764 L781 1773 M771.5 1755 L763 1764 L771.5 1773" fill="none" stroke="#444" stroke-width="2.6" stroke-linejoin="round"/>
    <circle cx="2526" cy="1764" r="14" fill="#444"/>
    <g fill="#fff"><circle cx="2520" cy="1759" r="1.8"/><circle cx="2531" cy="1762" r="1.8"/><circle cx="2524" cy="1769" r="1.8"/></g>
    <path d="M2738 1754 L2732.5 1758 L2735.5 1763 L2737.5 1762 V1773.5 H2751 V1762 L2753 1763 L2756 1758 L2750.5 1754 C2749.5 1757 2739 1757 2738 1754Z" fill="none" stroke="#444" stroke-width="2.2" stroke-linejoin="round"/>
    <circle cx="2808" cy="1764" r="12" fill="none" stroke="#444" stroke-width="2.2"/>
    <path d="M2804 1760.5 C2804 1757.5 2806 1756 2808 1756 C2810.5 1756 2812.2 1757.7 2812.2 1760 C2812.2 1763 2808 1763.5 2808 1766.5" fill="none" stroke="#444" stroke-width="2.2" stroke-linecap="round"/>
    <circle cx="2808" cy="1770.5" r="1.5" fill="#444"/>
  </svg>
</div>
<svg class="a" style="left:900px;top:280px" width="400" height="380" viewBox="900 280 400 380">
  <defs>
    <linearGradient id="cg" x1="0" y1="0" x2="0.35" y2="1"><stop offset="0" stop-color="#8a7ae6"/><stop offset="1" stop-color="#a65bf8"/></linearGradient>
    <filter id="cs" x="-60%" y="-60%" width="220%" height="220%"><feGaussianBlur in="SourceAlpha" stdDeviation="18"/><feOffset dx="2" dy="8"/><feComponentTransfer><feFuncA type="linear" slope="0.2"/></feComponentTransfer><feMerge><feMergeNode/><feMergeNode in="SourceGraphic"/></feMerge></filter>
  </defs>
  <path d="M1002.2 356.7 L1180.8 459.8 L1100.6 486 L1040.3 557.5Z" fill="#fff" stroke="#fff" stroke-width="5" stroke-linejoin="round" filter="url(#cs)"/>
  <path d="M1026 389.2 L1141.9 451.9 L1088.7 472.5 L1049 515.4Z" fill="url(#cg)" stroke="url(#cg)" stroke-width="2" stroke-linejoin="round"/>
</svg>
</div>
</body></html>
